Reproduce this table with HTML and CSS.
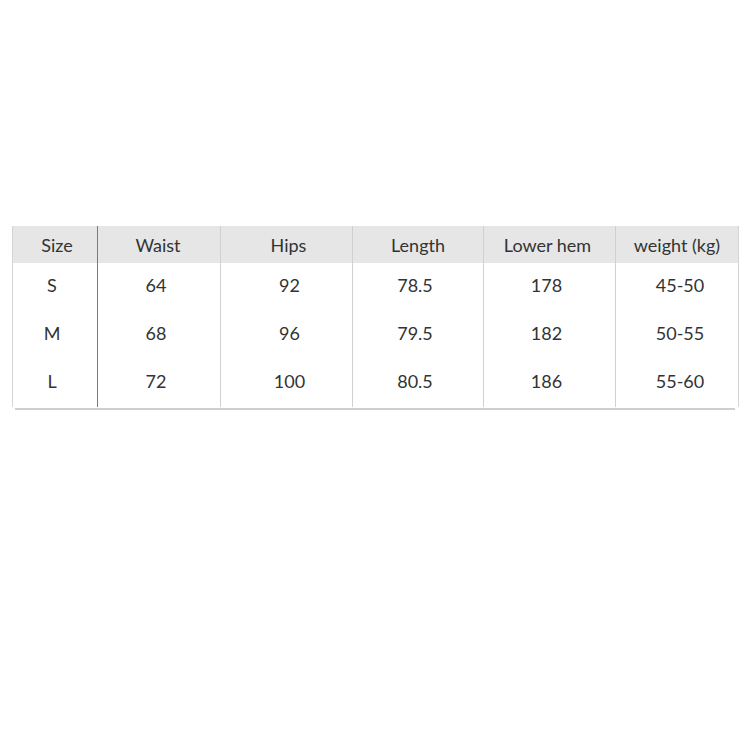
FILE: index.html
```html
<!DOCTYPE html>
<html>
<head>
<meta charset="utf-8">
<link rel="stylesheet" href="styles.css">
</head>
<body>
<div class="page">
  <div class="table">
    <div class="row head">
      <div class="cell first">Size</div>
      <div class="cell">Waist</div>
      <div class="cell">Hips</div>
      <div class="cell">Length</div>
      <div class="cell">Lower hem</div>
      <div class="cell last">weight (kg)</div>
    </div>
    <div class="row body">
      <div class="cell first">S</div>
      <div class="cell">64</div>
      <div class="cell">92</div>
      <div class="cell">78.5</div>
      <div class="cell">178</div>
      <div class="cell last">45-50</div>
    </div>
    <div class="row body">
      <div class="cell first">M</div>
      <div class="cell">68</div>
      <div class="cell">96</div>
      <div class="cell">79.5</div>
      <div class="cell">182</div>
      <div class="cell last">50-55</div>
    </div>
    <div class="row body">
      <div class="cell first">L</div>
      <div class="cell">72</div>
      <div class="cell">100</div>
      <div class="cell">80.5</div>
      <div class="cell">186</div>
      <div class="cell last">55-60</div>
    </div>
  </div>
  <div class="rule"></div>
</div>
</body>
</html>
```
FILE: styles.css
```css
html, body {
  margin: 0;
  padding: 0;
  background: #ffffff;
}
.page {
  padding: 226px 0 0 12px;
  width: 727px;
}
.table {
  border-left: 1px solid #d4d4d4;
  border-right: 1px solid #d4d4d4;
  font-family: Lato, "Liberation Sans", sans-serif;
  font-size: 18px;
  color: #333333;
}
.row {
  display: grid;
  grid-template-columns: 84px 123px 132px 131px 132px 123px;
  height: 48px;
}
.row.head {
  height: 37px;
  background: #e6e6e6;
}
.row.body .cell {
  padding-bottom: 4px;
}
.cell {
  display: flex;
  align-items: center;
  justify-content: center;
  border-left: 1px solid #d0d0d0;
}
.cell.first {
  border-left: none;
}
.cell:nth-child(2) {
  border-left: 1px solid #7a7a7a;
}
.head .cell:nth-child(1) {
  padding-left: 4px;
}
.head .cell:nth-child(2) {
  padding-right: 2px;
}
.head .cell:nth-child(3) {
  padding-left: 4px;
}
.head .cell:nth-child(5) {
  padding-right: 4px;
}
.row.body .cell:nth-child(1) {
  padding-right: 6px;
}
.row.body .cell:nth-child(2) {
  padding-right: 6px;
}
.row.body .cell:nth-child(3) {
  padding-left: 6px;
}
.row.body .cell:nth-child(4) {
  padding-right: 6px;
}
.row.body .cell:nth-child(5) {
  padding-right: 6px;
}
.row.body .cell:nth-child(6) {
  padding-left: 6px;
}
.rule {
  height: 2px;
  background: #cfcfcf;
  margin: 1px 4px 0 3px;
}
```
